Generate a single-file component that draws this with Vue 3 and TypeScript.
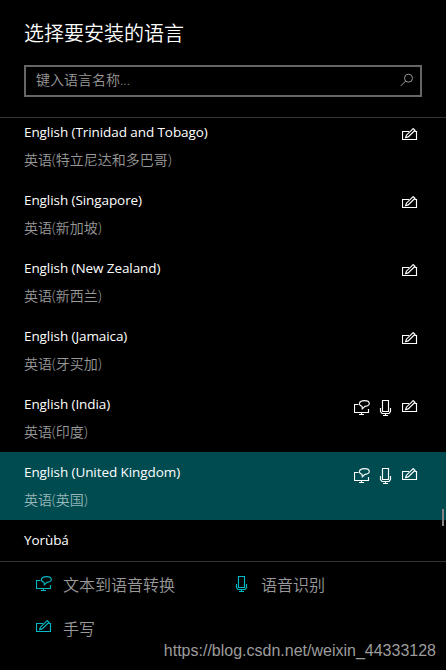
<script setup lang="ts">
import { defineComponent, h } from 'vue'

type Feature = 'speech' | 'mic' | 'pen'

interface Language {
  name: string
  local?: string
  features: Feature[]
  selected?: boolean
}

const shapes: Record<Feature, string[]> = {
  speech: [
    'M4.5 4.5H.5V12.5H14.5V9M7.5 12.5V14.5M5 14.5H10',
    'M8 6.2C3.9 5.2 4.6 .6 10.5 .6C16.8 .6 16.8 6.2 11 6.4L8.3 8.9Z',
  ],
  mic: ['M4.5 .5H10.5V11.5H4.5Z', 'M2.5 8V11.5L4 13.5H11L12.5 11.5V8M7.5 13.5V15.5M5 15.5H10'],
  pen: ['M7 3.5H.5V11.5H14.5V3.5H12.5', 'M3.6 9.7L4.4 7.2L11.2 .6L13 2.2L6.2 8.9Z'],
}

const FeatureIcon = defineComponent({
  props: { kind: { type: String, required: true } },
  setup(props) {
    return () =>
      h(
        'svg',
        {
          width: 16,
          height: 16,
          viewBox: '0 0 16 16',
          fill: 'none',
          stroke: 'currentColor',
          'stroke-width': 1.15,
        },
        shapes[props.kind as Feature].map((d) => h('path', { d })),
      )
  },
})

const languages: Language[] = [
  { name: 'English (Trinidad and Tobago)', local: '英语(特立尼达和多巴哥)', features: ['pen'] },
  { name: 'English (Singapore)', local: '英语(新加坡)', features: ['pen'] },
  { name: 'English (New Zealand)', local: '英语(新西兰)', features: ['pen'] },
  { name: 'English (Jamaica)', local: '英语(牙买加)', features: ['pen'] },
  { name: 'English (India)', local: '英语(印度)', features: ['speech', 'mic', 'pen'] },
  { name: 'English (United Kingdom)', local: '英语(英国)', features: ['speech', 'mic', 'pen'], selected: true },
  { name: 'Yorùbá', features: [] },
]

const legend: { kind: Feature; label: string }[] = [
  { kind: 'speech', label: '文本到语音转换' },
  { kind: 'mic', label: '语音识别' },
  { kind: 'pen', label: '手写' },
]
</script>

<template>
  <main class="dialog">
    <header class="header">
      <h1>选择要安装的语言</h1>
      <div class="search">
        <span>键入语言名称...</span>
        <svg width="14" height="14" viewBox="0 0 14 14" fill="none" stroke="currentColor">
          <circle cx="8.5" cy="5.2" r="4" />
          <path d="M5.6 8.1L.8 12.9" />
        </svg>
      </div>
    </header>

    <section class="list">
      <div class="rows">
        <div v-for="lang in languages" :key="lang.name" class="row" :class="{ selected: lang.selected }">
          <div>
            <div class="name">{{ lang.name }}</div>
            <div v-if="lang.local" class="local">{{ lang.local }}</div>
          </div>
          <div class="features">
            <FeatureIcon v-for="f in lang.features" :key="f" :kind="f" />
          </div>
        </div>
      </div>
      <i class="thumb"></i>
    </section>

    <footer class="footer">
      <div class="legend">
        <div v-for="item in legend" :key="item.kind" class="entry">
          <FeatureIcon :kind="item.kind" />
          <span>{{ item.label }}</span>
        </div>
      </div>
      <span class="watermark">https://blog.csdn.net/weixin_44333128</span>
    </footer>
  </main>
</template>

<style>
body {
  background: #000;
}
</style>

<style scoped>
.dialog {
  box-sizing: border-box;
  width: 446px;
  height: 670px;
  display: flex;
  flex-direction: column;
  overflow: hidden;
  background: #000;
  color: #fff;
  font-family: 'Open Sans', 'Noto Sans CJK SC', sans-serif;
  white-space: nowrap;
}
.header {
  box-sizing: border-box;
  height: 118px;
  flex: none;
  padding: 19px 24px 0;
  border-bottom: 1px solid #333;
}
h1 {
  margin: 0 0 16px;
  font-size: 20px;
  line-height: 30px;
  font-weight: 350;
}
.search {
  box-sizing: border-box;
  width: 398px;
  height: 32px;
  display: flex;
  align-items: center;
  justify-content: space-between;
  padding: 0 6px 2px 10px;
  border: 2px solid #666;
  color: #999;
  font-size: 14px;
  font-weight: 350;
  line-height: 26px;
}
.list {
  position: relative;
  height: 443px;
  flex: none;
  overflow: hidden;
}
.rows {
  margin-top: -6px;
}
.row {
  box-sizing: border-box;
  height: 68px;
  display: flex;
  justify-content: space-between;
  padding: 6px 28px 0 24px;
}
.selected {
  background: #004b50;
}
.name,
.local {
  height: 28px;
  font-size: 14px;
  line-height: 28px;
}
.name {
  font-size: 13.5px;
  letter-spacing: -0.08px;
}
.local {
  color: #999;
  font-weight: 350;
}
.selected .local {
  color: #99b7b9;
}
.features {
  display: flex;
  gap: 8px;
  padding-top: 10px;
}
.thumb {
  position: absolute;
  right: 2px;
  top: 391px;
  width: 2px;
  height: 17px;
  background: #858585;
}
.footer {
  position: relative;
  box-sizing: border-box;
  flex: 1;
  border-top: 1px solid #333;
}
.legend {
  display: grid;
  grid-template-columns: 198px 198px;
  grid-auto-rows: 44px;
  padding: 0 0 0 36px;
}
.entry {
  display: flex;
  align-items: center;
  gap: 11px;
  color: #999;
  font-size: 16px;
  font-weight: 350;
}
.entry svg {
  color: #00b7c3;
}
.watermark {
  position: absolute;
  right: 10px;
  bottom: 9px;
  color: #9c9c9c;
  font: 16px/20px 'Liberation Sans', sans-serif;
}
</style>
